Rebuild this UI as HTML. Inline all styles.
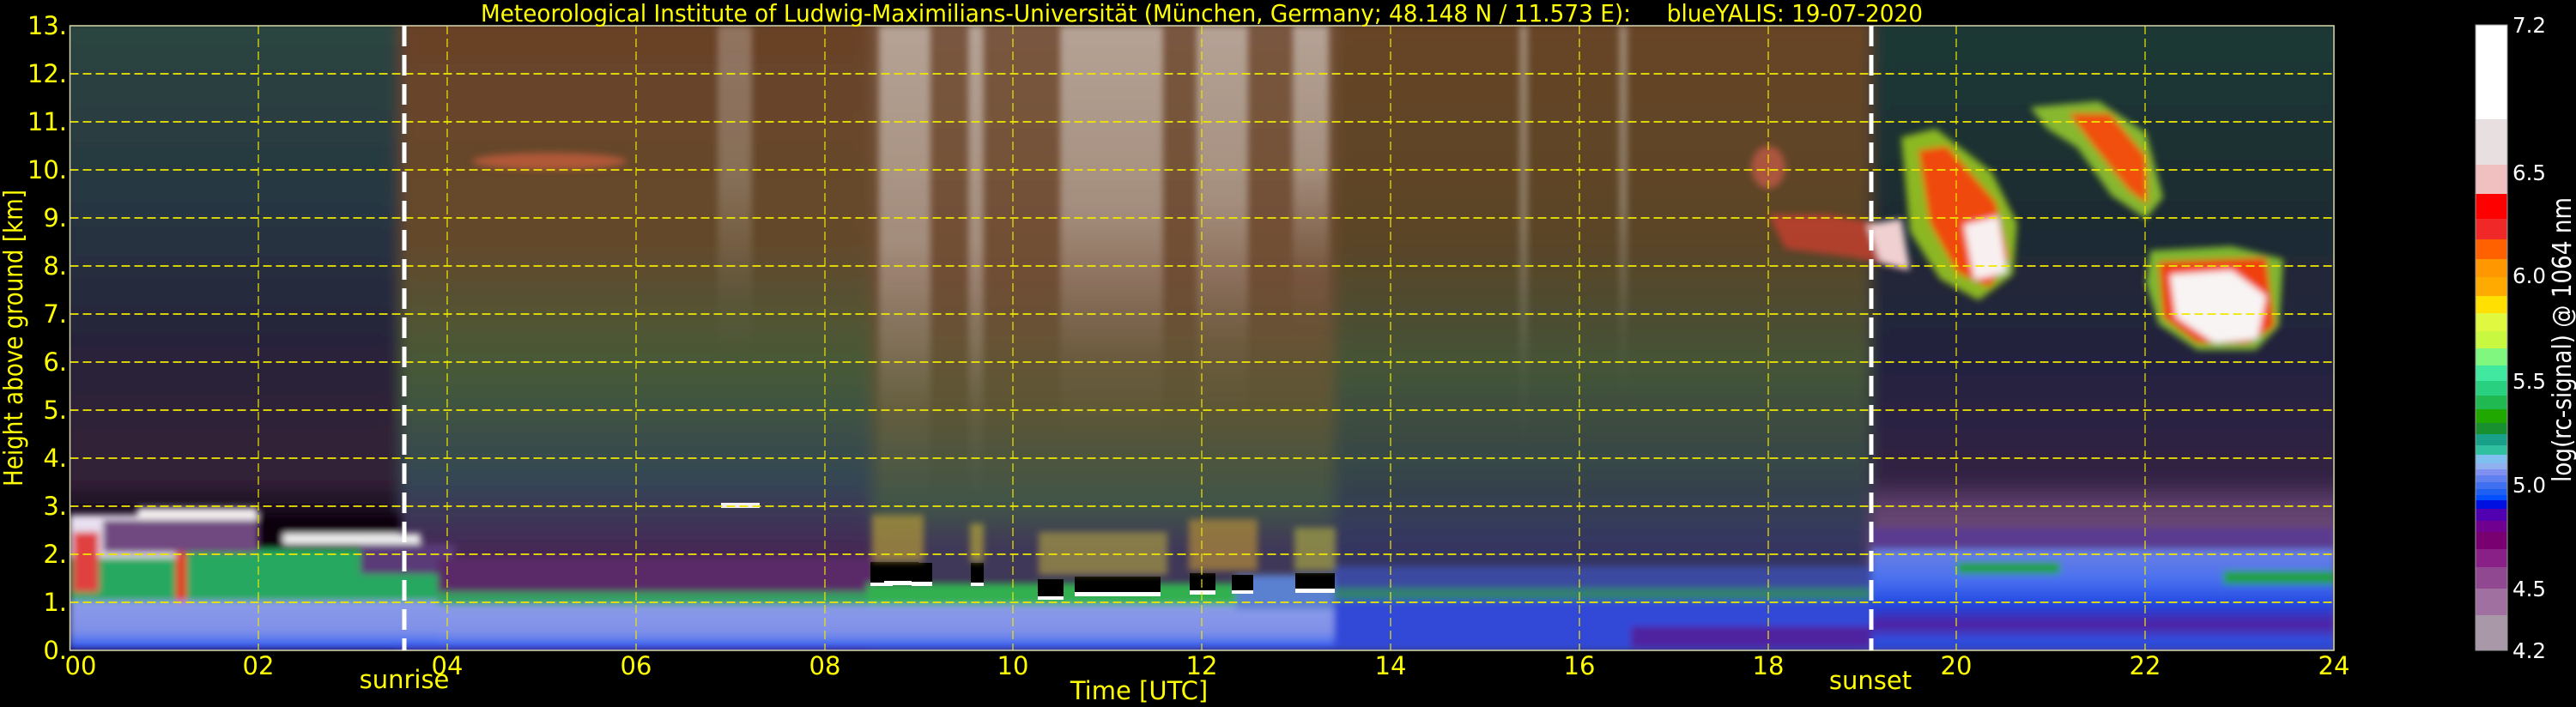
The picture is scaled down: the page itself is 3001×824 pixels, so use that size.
<!DOCTYPE html>
<html><head><meta charset="utf-8"><style>
html,body{margin:0;padding:0;background:#000;width:3001px;height:824px;overflow:hidden}
svg{display:block}
text{font-family:"DejaVu Sans","Liberation Sans",sans-serif;}
</style></head><body>
<svg width="3001" height="824" viewBox="0 0 3001 824" xmlns="http://www.w3.org/2000/svg">
<defs>
<clipPath id="pc"><rect x="81.5" y="30" width="2637.5" height="728"/></clipPath>
<filter id="bl4"><feGaussianBlur stdDeviation="4"/></filter>
<filter id="bl8"><feGaussianBlur stdDeviation="8"/></filter>
<linearGradient id="gA" x1="0" y1="0" x2="0" y2="1">
<stop offset="0" stop-color="#2a4640"/><stop offset="0.3" stop-color="#283642"/><stop offset="0.5" stop-color="#28243a"/><stop offset="0.72" stop-color="#342038"/><stop offset="0.76" stop-color="#1a1020"/><stop offset="1" stop-color="#1a1020"/></linearGradient>
<linearGradient id="gB" x1="0" y1="0" x2="0" y2="1">
<stop offset="0" stop-color="#6a4228"/><stop offset="0.35" stop-color="#644a2c"/><stop offset="0.55" stop-color="#465a38"/><stop offset="0.72" stop-color="#344654"/><stop offset="0.82" stop-color="#442a58"/><stop offset="0.86" stop-color="#4a2452"/><stop offset="1" stop-color="#4a2452"/></linearGradient>
<linearGradient id="gC" x1="0" y1="0" x2="0" y2="1">
<stop offset="0" stop-color="#7a5840"/><stop offset="0.4" stop-color="#704e34"/><stop offset="0.6" stop-color="#5e5634"/><stop offset="0.76" stop-color="#405448"/><stop offset="0.82" stop-color="#403858"/><stop offset="1" stop-color="#403858"/></linearGradient>
<linearGradient id="gD" x1="0" y1="0" x2="0" y2="1">
<stop offset="0" stop-color="#684428"/><stop offset="0.35" stop-color="#5a4428"/><stop offset="0.55" stop-color="#445438"/><stop offset="0.72" stop-color="#34444a"/><stop offset="0.82" stop-color="#363662"/><stop offset="1" stop-color="#363662"/></linearGradient>
<linearGradient id="gE" x1="0" y1="0" x2="0" y2="1">
<stop offset="0" stop-color="#1e3a36"/><stop offset="0.3" stop-color="#1e2c32"/><stop offset="0.55" stop-color="#242240"/><stop offset="0.72" stop-color="#342444"/><stop offset="0.76" stop-color="#603f6e"/><stop offset="0.82" stop-color="#705078"/><stop offset="1" stop-color="#705078"/></linearGradient>
<linearGradient id="gLow" x1="0" y1="0" x2="0" y2="1">
<stop offset="0" stop-color="#8a9ae8"/><stop offset="0.6" stop-color="#8090e8"/><stop offset="0.85" stop-color="#4a70f0"/><stop offset="0.95" stop-color="#1040f0"/><stop offset="1" stop-color="#6a2070"/></linearGradient>
<linearGradient id="gLowE" x1="0" y1="0" x2="0" y2="1">
<stop offset="0" stop-color="#6a80e0"/><stop offset="0.3" stop-color="#4a70f0"/><stop offset="0.55" stop-color="#2048e0"/><stop offset="0.75" stop-color="#5020a0"/><stop offset="0.9" stop-color="#3050e0"/><stop offset="1" stop-color="#2040d0"/></linearGradient>
<linearGradient id="gStreak" x1="0" y1="0" x2="0" y2="1">
<stop offset="0" stop-color="#fff" stop-opacity="0.45"/><stop offset="0.45" stop-color="#fff" stop-opacity="0.35"/><stop offset="0.8" stop-color="#fff" stop-opacity="0.05"/><stop offset="1" stop-color="#fff" stop-opacity="0"/></linearGradient>
</defs>

<g clip-path="url(#pc)">
<g filter="url(#bl8)">
<rect x="70" y="20" width="400" height="750" fill="url(#gA)"/>
<rect x="466" y="20" width="550" height="750" fill="url(#gB)"/>
<rect x="1016" y="20" width="540" height="750" fill="url(#gC)"/>
<rect x="1554" y="20" width="626" height="750" fill="url(#gD)"/>
<rect x="2180" y="20" width="550" height="750" fill="url(#gE)"/>
</g>
<g filter="url(#bl4)">
<rect x="81" y="640" width="430" height="65" fill="#28a860"/>
<rect x="81" y="600" width="130" height="50" fill="#e8e0f0"/>
<rect x="85" y="620" width="30" height="70" fill="#e04040"/>
<rect x="205" y="640" width="12" height="65" fill="#e83020"/>
<rect x="160" y="592" width="140" height="14" fill="#f4f0f0"/>
<rect x="120" y="606" width="180" height="38" fill="#704a80"/>
<rect x="300" y="600" width="165" height="40" fill="#0a0610"/>
<rect x="330" y="622" width="160" height="12" fill="#f0f0f0"/>
<rect x="420" y="634" width="110" height="35" fill="#5a3a78"/>
<rect x="81" y="700" width="440" height="58" fill="url(#gLow)"/>
<rect x="510" y="650" width="510" height="50" fill="#5a2a68"/>
<rect x="510" y="690" width="510" height="20" fill="#30a060"/>
<rect x="1010" y="680" width="550" height="28" fill="#30b050"/>
<rect x="510" y="705" width="1060" height="53" fill="url(#gLow)"/>
<rect x="1440" y="670" width="130" height="40" fill="#5a80d0"/>
<rect x="1554" y="660" width="630" height="40" fill="#3a4aa0"/>
<rect x="1554" y="685" width="630" height="20" fill="#308070"/>
<rect x="1554" y="700" width="630" height="58" fill="#3048d8"/>
<rect x="1900" y="730" width="280" height="25" fill="#5020a0"/>
<rect x="2180" y="640" width="540" height="118" fill="url(#gLowE)"/>
<rect x="2180" y="615" width="540" height="25" fill="#5a3a90"/>
<rect x="2280" y="655" width="120" height="14" fill="#20a040"/>
<rect x="2590" y="665" width="130" height="16" fill="#20a040"/>
</g>
<g>
<rect x="1014" y="655" width="26" height="26" fill="#000"/><rect x="1014" y="679" width="26" height="4" fill="#fff"/>
<rect x="1030" y="655" width="40" height="22" fill="#000"/><rect x="1030" y="677" width="40" height="5" fill="#fff"/>
<rect x="1062" y="656" width="24" height="22" fill="#000"/><rect x="1062" y="678" width="24" height="5" fill="#fff"/>
<rect x="1131" y="656" width="15" height="24" fill="#000"/><rect x="1131" y="679" width="15" height="4" fill="#fff"/>
<rect x="1209" y="675" width="30" height="24" fill="#000"/><rect x="1209" y="695" width="30" height="4" fill="#fff"/>
<rect x="1252" y="672" width="100" height="20" fill="#000"/><rect x="1252" y="690" width="100" height="5" fill="#fff"/>
<rect x="1386" y="668" width="30" height="22" fill="#000"/><rect x="1386" y="688" width="30" height="5" fill="#fff"/>
<rect x="1435" y="670" width="25" height="20" fill="#000"/><rect x="1435" y="688" width="25" height="4" fill="#fff"/>
<rect x="1509" y="668" width="46" height="20" fill="#000"/><rect x="1509" y="686" width="46" height="5" fill="#fff"/>
<rect x="840" y="586" width="45" height="6" fill="#f0f0f0"/>
</g>
<g filter="url(#bl4)" opacity="0.55">
<rect x="1016" y="600" width="60" height="55" fill="#d0b030"/>
<rect x="1130" y="610" width="16" height="45" fill="#d0c030"/>
<rect x="1210" y="620" width="150" height="50" fill="#c0b040"/>
<rect x="1385" y="605" width="80" height="60" fill="#d0a030"/>
<rect x="1508" y="615" width="48" height="50" fill="#c0c040"/>
</g>
<g filter="url(#bl4)">
<rect x="1024" y="30" width="60" height="560" fill="url(#gStreak)"/>
<rect x="1128" y="30" width="18" height="560" fill="url(#gStreak)"/>
<rect x="1235" y="30" width="120" height="480" fill="url(#gStreak)"/>
<rect x="1394" y="30" width="60" height="460" fill="url(#gStreak)"/>
<rect x="1506" y="30" width="42" height="360" fill="url(#gStreak)"/>
<rect x="836" y="30" width="40" height="400" fill="url(#gStreak)" opacity="0.6"/>
<rect x="1770" y="30" width="10" height="500" fill="url(#gStreak)" opacity="0.8"/>
<rect x="1886" y="30" width="10" height="450" fill="url(#gStreak)" opacity="0.8"/>
</g>
<g filter="url(#bl4)">
<ellipse cx="640" cy="188" rx="90" ry="10" fill="#d06040" opacity="0.7"/>
<ellipse cx="2060" cy="195" rx="20" ry="25" fill="#e06050" opacity="0.6"/>
<path d="M2060 250 L2130 250 L2215 265 L2220 315 L2160 300 L2080 290 Z" fill="#c04030" opacity="0.85"/>
<path d="M2175 262 L2215 255 L2225 315 L2190 305 Z" fill="#f0d0d0"/>
<path d="M2215 160 L2255 150 L2320 200 L2350 260 L2345 320 L2305 350 L2260 325 L2225 270 Z" fill="#a0d020" opacity="0.85"/>
<path d="M2235 175 L2268 170 L2325 235 L2340 300 L2318 335 L2280 318 L2248 260 Z" fill="#f04a10"/>
<path d="M2288 262 L2328 252 L2338 318 L2300 326 Z" fill="#f8f0f0"/>
<path d="M2365 125 L2445 118 L2500 155 L2520 230 L2500 255 L2460 228 L2420 172 L2385 150 Z" fill="#9ad030" opacity="0.85"/>
<path d="M2410 132 L2458 132 L2500 182 L2502 238 L2480 222 L2440 172 Z" fill="#f05010"/>
<path d="M2505 292 L2600 287 L2660 302 L2655 380 L2628 408 L2560 408 L2515 378 L2500 330 Z" fill="#90d030" opacity="0.85"/>
<path d="M2515 305 L2640 300 L2650 380 L2620 400 L2560 400 L2520 370 Z" fill="#f04010"/>
<path d="M2528 320 L2600 315 L2640 345 L2630 395 L2580 400 L2535 370 Z" fill="#f8f4f4"/>
</g>
</g>

<g stroke="#f0e800" stroke-width="1.8" stroke-dasharray="10,5" fill="none">
<path d="M81.5 86H2719M81.5 142H2719M81.5 198H2719M81.5 254H2719M81.5 310H2719M81.5 366H2719M81.5 422H2719M81.5 478H2719M81.5 534H2719M81.5 590H2719M81.5 646H2719M81.5 702H2719"/>
<path d="M301 30V758M521 30V758M741 30V758M961 30V758M1180 30V758M1400 30V758M1620 30V758M1840 30V758M2060 30V758M2279 30V758M2499 30V758" stroke-width="1.2"/>
</g>
<rect x="81.5" y="30" width="2637.5" height="728" fill="none" stroke="#d8d8b0" stroke-width="1.5"/>
<g stroke="#fff" stroke-width="5" stroke-dasharray="24,10">
<path d="M471 30V758"/><path d="M2180 30V758"/>
</g>

<g fill="#ffff00" font-size="29" text-anchor="end">
<text x="78" y="40">13.</text><text x="78" y="96">12.</text><text x="78" y="152">11.</text><text x="78" y="208">10.</text>
<text x="78" y="264">9.</text><text x="78" y="320">8.</text><text x="78" y="376">7.</text><text x="78" y="432">6.</text>
<text x="78" y="488">5.</text><text x="78" y="544">4.</text><text x="78" y="600">3.</text><text x="78" y="656">2.</text>
<text x="78" y="712">1.</text><text x="78" y="768">0.</text>
</g>
<g fill="#ffff00" font-size="29" text-anchor="middle">
<text x="94" y="786">00</text><text x="301" y="786">02</text><text x="521" y="786">04</text><text x="741" y="786">06</text>
<text x="961" y="786">08</text><text x="1180" y="786">10</text><text x="1400" y="786">12</text><text x="1620" y="786">14</text>
<text x="1840" y="786">16</text><text x="2060" y="786">18</text><text x="2279" y="786">20</text><text x="2499" y="786">22</text>
<text x="2719" y="786">24</text>
<text x="471" y="802">sunrise</text><text x="2179" y="803">sunset</text>
<text x="1327" y="815">Time [UTC]</text>
</g>
<text x="26" y="394" fill="#ffff00" font-size="30" text-anchor="middle" transform="rotate(-90 26 394)" textLength="346" lengthAdjust="spacingAndGlyphs">Height above ground [km]</text>
<text x="1400" y="25" fill="#ffff00" font-size="28" text-anchor="middle" textLength="1680" lengthAdjust="spacingAndGlyphs" xml:space="preserve">Meteorological Institute of Ludwig-Maximilians-Universität (München, Germany; 48.148 N / 11.573 E):     blueYALIS: 19-07-2020</text>

<g>
<rect x="2884" y="29" width="37" height="110" fill="#ffffff"/>
<rect x="2884" y="139" width="37" height="53" fill="#e8e0e0"/>
<rect x="2884" y="192" width="37" height="34" fill="#f0c0c0"/>
<rect x="2884" y="226" width="37" height="29" fill="#ff0000"/>
<rect x="2884" y="255" width="37" height="24" fill="#f02828"/>
<rect x="2884" y="279" width="37" height="23" fill="#ff6000"/>
<rect x="2884" y="302" width="37" height="21" fill="#ff9800"/>
<rect x="2884" y="323" width="37" height="22" fill="#ffaa00"/>
<rect x="2884" y="345" width="37" height="20" fill="#ffe000"/>
<rect x="2884" y="365" width="37" height="21" fill="#e0f840"/>
<rect x="2884" y="386" width="37" height="20" fill="#c8f840"/>
<rect x="2884" y="406" width="37" height="20" fill="#80f880"/>
<rect x="2884" y="426" width="37" height="18" fill="#40e8a0"/>
<rect x="2884" y="444" width="37" height="17" fill="#28d080"/>
<rect x="2884" y="461" width="37" height="16" fill="#20b850"/>
<rect x="2884" y="477" width="37" height="16" fill="#20a800"/>
<rect x="2884" y="493" width="37" height="13" fill="#189030"/>
<rect x="2884" y="506" width="37" height="13" fill="#18a088"/>
<rect x="2884" y="519" width="37" height="11" fill="#30c0a0"/>
<rect x="2884" y="530" width="37" height="10" fill="#80c0f0"/>
<rect x="2884" y="540" width="37" height="7" fill="#90b0f0"/>
<rect x="2884" y="547" width="37" height="7" fill="#8090f0"/>
<rect x="2884" y="554" width="37" height="8" fill="#6080f0"/>
<rect x="2884" y="562" width="37" height="8" fill="#4070f0"/>
<rect x="2884" y="570" width="37" height="7" fill="#2060f0"/>
<rect x="2884" y="577" width="37" height="6" fill="#0050ff"/>
<rect x="2884" y="583" width="37" height="10" fill="#0010e0"/>
<rect x="2884" y="593" width="37" height="14" fill="#5000b0"/>
<rect x="2884" y="607" width="37" height="13" fill="#700090"/>
<rect x="2884" y="620" width="37" height="20" fill="#780070"/>
<rect x="2884" y="640" width="37" height="21" fill="#882088"/>
<rect x="2884" y="661" width="37" height="25" fill="#904890"/>
<rect x="2884" y="686" width="37" height="31" fill="#a070a0"/>
<rect x="2884" y="717" width="37" height="41" fill="#a898a8"/>
<rect x="2884" y="29" width="37" height="729" fill="none" stroke="#999" stroke-width="1"/>
</g>
<g fill="#ffffff" font-size="25">
<text x="2927" y="38" textLength="39" lengthAdjust="spacingAndGlyphs">7.2</text>
<text x="2927" y="210" textLength="39" lengthAdjust="spacingAndGlyphs">6.5</text>
<text x="2927" y="330" textLength="39" lengthAdjust="spacingAndGlyphs">6.0</text>
<text x="2927" y="453" textLength="39" lengthAdjust="spacingAndGlyphs">5.5</text>
<text x="2927" y="574" textLength="39" lengthAdjust="spacingAndGlyphs">5.0</text>
<text x="2927" y="695" textLength="39" lengthAdjust="spacingAndGlyphs">4.5</text>
<text x="2927" y="767" textLength="39" lengthAdjust="spacingAndGlyphs">4.2</text>
</g>
<text x="2995" y="396" fill="#ffffff" font-size="30" text-anchor="middle" transform="rotate(-90 2995 396)" textLength="332" lengthAdjust="spacingAndGlyphs">log(rc-signal) @ 1064 nm</text>
</svg>
</body></html>
